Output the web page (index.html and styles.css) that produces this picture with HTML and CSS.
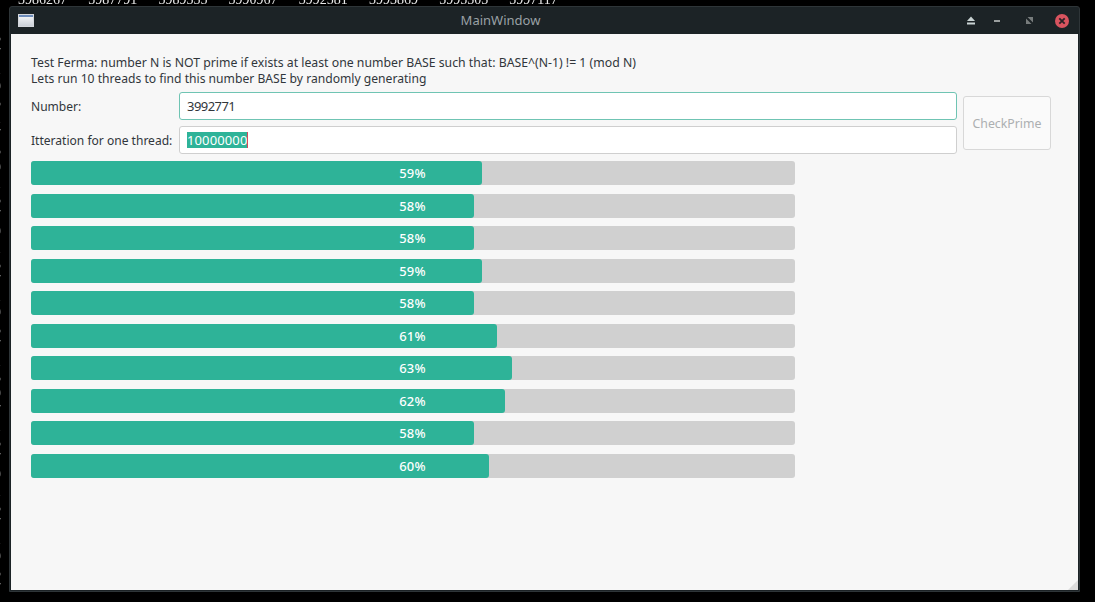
FILE: index.html
```html
<!DOCTYPE html>
<html lang="en">
<head>
<meta charset="utf-8">
<title>MainWindow</title>
<link rel="stylesheet" href="styles.css">
</head>
<body>
<div class="desktop">
  <div class="term-top"><span>3986267</span><span>3987791</span><span>3989335</span><span>3990967</span><span>3992581</span><span>3993869</span><span>3995303</span><span>3997117</span></div>
  <div class="term-left">
    <span>3</span><span>7</span><span>1</span><span>9</span><span>3</span><span>1</span><span>7</span><span>3</span><span>9</span><span>1</span><span>3</span><span>7</span><span>9</span><span>1</span><span>3</span><span>7</span><span>1</span><span>9</span><span>3</span><span>7</span><span>1</span><span>3</span><span>9</span><span>7</span><span>1</span><span>3</span><span>7</span><span>9</span><span>1</span><span>3</span><span>7</span><span>1</span><span>9</span><span>3</span><span>7</span><span>1</span>
  </div>
  <div class="window">
    <header class="titlebar">
      <svg class="app-icon" width="16" height="13" viewBox="0 0 16 13"><defs><linearGradient id="g" x1="0" y1="0" x2="0" y2="1"><stop offset="0" stop-color="#fbfcfd"/><stop offset="1" stop-color="#c9ced6"/></linearGradient></defs><rect x="0.5" y="0.5" width="15" height="12" fill="url(#g)" stroke="#d4d7dc"/><rect x="1" y="1" width="14" height="2" fill="#6d8cbb"/></svg>
      <span class="title">MainWindow</span>
      <div class="controls">
        <svg class="ctl-shade" width="10" height="9" viewBox="0 0 10 9"><path d="M5 0.5 L9 5 H1 Z" fill="#c9d3d3"/><rect x="1" y="6.5" width="8" height="2" fill="#c9d3d3"/></svg>
        <svg class="ctl-min" width="6" height="2" viewBox="0 0 6 2"><rect width="6" height="2" fill="#9a9f9f"/></svg>
        <svg class="ctl-max" width="7" height="7" viewBox="0 0 7 7"><path d="M1.5 0H7V5.5Z M0 1.5V7H5.5Z" fill="#777c7c"/></svg>
        <svg class="ctl-close" width="14" height="14" viewBox="0 0 14 14"><circle cx="7" cy="7" r="7" fill="#d9545f"/><path d="M4.3 4.3 L9.7 9.7 M9.7 4.3 L4.3 9.7" stroke="#2a2226" stroke-width="1.8"/></svg>
      </div>
    </header>
    <main class="content">
      <p class="intro"><span class="l1">Test Ferma: number N is NOT prime if exists at least one number BASE such that: BASE^(N-1) != 1 (mod N)</span><br><span class="l2">Lets run 10 threads to find this number BASE by randomly generating</span></p>
      <div class="form">
        <label class="lab">Number:</label>
        <div class="field focused"><span class="num">3992771</span></div>
        <button class="check">CheckPrime</button>
        <label class="lab">Itteration for one thread:</label>
        <div class="field"><span class="sel">10000000</span><span class="caret"></span></div>
      </div>
      <div class="bars">
        <div class="bar"><div class="fill" style="width:59%"></div><span class="pct">59%</span></div>
        <div class="bar"><div class="fill" style="width:58%"></div><span class="pct">58%</span></div>
        <div class="bar"><div class="fill" style="width:58%"></div><span class="pct">58%</span></div>
        <div class="bar"><div class="fill" style="width:59%"></div><span class="pct">59%</span></div>
        <div class="bar"><div class="fill" style="width:58%"></div><span class="pct">58%</span></div>
        <div class="bar"><div class="fill" style="width:61%"></div><span class="pct">61%</span></div>
        <div class="bar"><div class="fill" style="width:63%"></div><span class="pct">63%</span></div>
        <div class="bar"><div class="fill" style="width:62%"></div><span class="pct">62%</span></div>
        <div class="bar"><div class="fill" style="width:58%"></div><span class="pct">58%</span></div>
        <div class="bar"><div class="fill" style="width:60%"></div><span class="pct">60%</span></div>
      </div>
      <div class="grip"></div>
    </main>
  </div>
</div>
</body>
</html>
```
FILE: styles.css
```css
* { box-sizing: border-box; }
html, body { margin: 0; height: 100%; overflow: hidden; background: #000; }
body { font-family: "Noto Sans", sans-serif; font-size: 12.2px; color: #31363b; }
.desktop { position: relative; width: 1095px; height: 602px; background: #000; overflow: hidden; }
.term-top { position: absolute; left: 18px; top: -8px; display: flex; gap: 14.6px; font: 14px/16px "Liberation Serif", serif; color: #e8e8e8; filter: grayscale(1); }
.term-top span { width: 55.6px; }
.term-left { position: absolute; left: -6px; top: 30px; display: flex; flex-direction: column; font: 14px/16.2px "Liberation Serif", serif; color: #a8a8a8; filter: grayscale(1); }
.window { position: absolute; left: 9px; top: 6px; width: 1071px; height: 586px; background: #1c2326; border: 1px solid #2e3538; border-radius: 3px 3px 0 0; padding: 0 1px 1px 1px; display: flex; flex-direction: column; }
.titlebar { height: 27px; flex: none; display: flex; align-items: center; position: relative; padding: 0 9px 0 7px; }
.app-icon { flex: none; }
.title { position: absolute; left: 0; right: 88px; text-align: center; color: #9aa1a5; font-size: 13px; line-height: 27px; }
.controls { margin-left: auto; display: flex; align-items: center; position: relative; }
.ctl-min { margin-left: 18px; }
.ctl-max { margin-left: 26px; }
.ctl-close { margin-left: 22px; }
.content { flex: 1; background: #f7f7f7; padding: 21px 28px 0 20px; position: relative; min-height: 0; }
.intro { margin: 0; line-height: 16px; }
.l1 { font-size: 12.27px; }
.l2 { font-size: 12.14px; }
.form { display: grid; grid-template-columns: 142px 778px 88px; column-gap: 6px; row-gap: 6px; grid-template-rows: 28px 28px; margin-top: 5px; }
.lab { align-self: center; white-space: nowrap; font-size: 12.05px; line-height: 16px; padding-top: 2px; }
.field { height: 28px; background: #fff; border: 1px solid #cfcfcf; border-radius: 3px; padding: 0 7px; font-size: 13px; line-height: 26px; display: flex; align-items: center; }
.field.focused { border-color: #6fc4b3; }
.num { letter-spacing: -0.55px; }
.sel { background: #2eb398; color: #fff; line-height: 16px; height: 16px; letter-spacing: 0.12px; }
.caret { flex: none; width: 1px; height: 16px; background: #d9455f; }
.check { grid-column: 3; grid-row: 1 / span 2; align-self: center; height: 54px; background: #fafafa; border: 1px solid #d8d8d8; border-radius: 3px; color: #acafb1; font: 12.3px "Noto Sans", sans-serif; padding: 0; }
.bars { width: 764px; margin-top: 7px; display: flex; flex-direction: column; gap: 8.5px; }
.bar { height: 24px; position: relative; background: #d0d0d0; border-radius: 3px; display: flex; align-items: center; justify-content: center; }
.fill { position: absolute; left: 0; top: 0; bottom: 0; background: #2eb398; border-radius: 3px; }
.pct { position: relative; color: #fff; font-size: 13px; font-weight: 500; line-height: 16px; letter-spacing: 0.25px; margin-right: 1px; }
.grip { position: absolute; right: 0; bottom: 0; width: 0; height: 0; border-style: solid; border-width: 0 0 10px 10px; border-color: transparent transparent #dcdcdc transparent; }
```
